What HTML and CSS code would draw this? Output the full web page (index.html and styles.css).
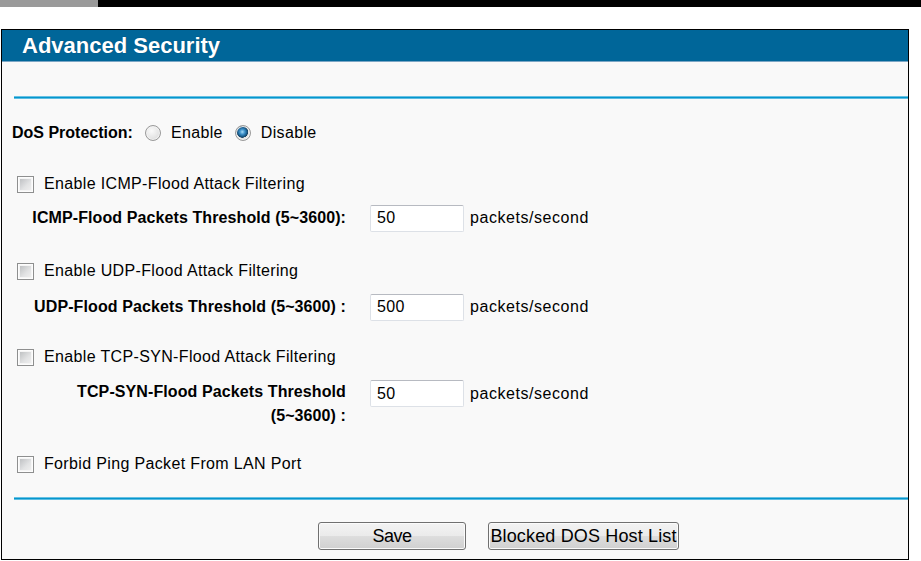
FILE: index.html
```html
<!DOCTYPE html>
<html>
<head>
<meta charset="utf-8">
<title>Advanced Security</title>
<link rel="stylesheet" href="styles.css">
</head>
<body>
<div class="topbar"><div class="topbar-gray"></div></div>
<div class="frame">
  <div class="header">Advanced Security</div>
  <div class="rule rule-top"></div>

  <div class="row row-dos">
    <span class="bold">DoS Protection:</span>
    <input type="radio" name="dos" class="radio radio-first">
    <span class="txt">Enable</span>
    <input type="radio" name="dos" class="radio" checked>
    <span class="txt">Disable</span>
  </div>

  <div class="row row-cb row-gap17">
    <input type="checkbox" class="cb">
    <span class="txt">Enable ICMP-Flood Attack Filtering</span>
  </div>
  <div class="row row-th">
    <span class="label bold">ICMP-Flood Packets Threshold (5~3600):</span>
    <input type="text" class="field" value="50">
    <span class="txt unit">packets/second</span>
  </div>

  <div class="row row-cb row-gap19">
    <input type="checkbox" class="cb">
    <span class="txt">Enable UDP-Flood Attack Filtering</span>
  </div>
  <div class="row row-th row-gap2">
    <span class="label bold">UDP-Flood Packets Threshold (5~3600) :</span>
    <input type="text" class="field" value="500">
    <span class="txt unit">packets/second</span>
  </div>

  <div class="row row-cb row-gap16">
    <input type="checkbox" class="cb">
    <span class="txt">Enable TCP-SYN-Flood Attack Filtering</span>
  </div>
  <div class="row row-th row-wrap">
    <span class="label bold">TCP-SYN-Flood Packets Threshold (5~3600) :</span>
    <input type="text" class="field" value="50">
    <span class="txt unit">packets/second</span>
  </div>

  <div class="row row-cb row-gap19">
    <input type="checkbox" class="cb">
    <span class="txt">Forbid Ping Packet From LAN Port</span>
  </div>

  <div class="rule rule-bottom"></div>

  <div class="buttons">
    <button class="btn btn-save">Save</button>
    <button class="btn btn-list">Blocked DOS Host List</button>
  </div>
</div>
</body>
</html>
```

FILE: styles.css
```css
html, body {
  margin: 0;
  padding: 0;
  background: #ffffff;
}

body {
  font-family: "Liberation Sans", Arial, sans-serif;
  font-size: 16px;
  color: #000;
  width: 921px;
  height: 561px;
  overflow: hidden;
}

.topbar {
  height: 7px;
  background: #000;
  display: flex;
}

.topbar-gray {
  width: 98px;
  background: #9a9a9a;
}

.frame {
  box-sizing: border-box;
  margin-top: 22px;
  margin-left: 1px;
  width: 908px;
  height: 531px;
  border: 1px solid #000;
  background: #f9f9f9;
  display: flex;
  flex-direction: column;
}

.header {
  height: 31px;
  line-height: 31px;
  background: #006699;
  border-bottom: 1px solid #7ba6c5;
  color: #fff;
  font-weight: bold;
  font-size: 22px;
  padding-left: 20px;
  text-shadow: 0 0 1px rgba(0, 40, 70, 0.6);
}

.rule {
  height: 3px;
  margin-left: 12px;
  background: linear-gradient(#68c1e3 0%, #68c1e3 33%, #0596cd 33%, #0596cd 67%, #5dbde2 67%);
}

.rule-top {
  margin-top: 34px;
}

.rule-bottom {
  margin-top: 16px;
}

.row {
  display: flex;
  align-items: center;
  height: 34px;
  flex-shrink: 0;
}

.row-dos {
  margin-top: 17px;
  padding-left: 10px;
}

.row-gap17 { margin-top: 17px; }
.row-gap19 { margin-top: 19px; }
.row-gap16 { margin-top: 16px; }
.row-gap2 { margin-top: 2px; }

.bold {
  font-weight: bold;
}

.txt {
  letter-spacing: 0.35px;
}

.radio {
  appearance: none;
  -webkit-appearance: none;
  box-sizing: border-box;
  width: 16px;
  height: 16px;
  margin: 0 10px 0 12px;
  border-radius: 50%;
  border: 1px solid #9a9a9a;
  background: radial-gradient(circle at 40% 35%, #fafafa 0%, #e6e6e6 55%, #cfcfcf 100%);
  box-shadow: inset 0 0 0 1px #f2f2f2;
}

.radio:checked {
  background:
    radial-gradient(circle at 45% 42%, #a8dcf6 0%, #3f92cb 22%, #1b5f8f 40%, #173f5e 50%, rgba(0,0,0,0) 54%),
    radial-gradient(circle at 40% 35%, #fafafa 0%, #e6e6e6 55%, #cfcfcf 100%);
}

.radio-first {
  margin-left: 12px;
}

.row-cb {
  padding-left: 15px;
}

.cb {
  appearance: none;
  -webkit-appearance: none;
  box-sizing: border-box;
  width: 17px;
  height: 17px;
  margin: 1px 10px 0 0;
  padding: 2px;
  border: 1px solid #8e8f8f;
  background: linear-gradient(135deg, #bfc1c3 0%, #e2e3e4 60%, #eeeeee 100%) content-box, #f5f5f5;
  box-shadow: inset 0 0 0 1px #fdfdfd;
}

.row-th {
  padding-left: 23px;
}

.label {
  width: 321px;
  flex-shrink: 0;
  text-align: right;
  letter-spacing: 0.1px;
}

.field {
  box-sizing: border-box;
  width: 94px;
  height: 27px;
  margin: 0 0 0 24px;
  padding: 0 0 0 6px;
  border: 1px solid #dde1e7;
  border-top-color: #b7bac1;
  border-radius: 2px;
  background: #fff;
  font-family: "Liberation Sans", Arial, sans-serif;
  font-size: 16px;
  letter-spacing: 0.3px;
  color: #000;
}

.unit {
  margin-left: 6px;
  letter-spacing: 0.55px;
}

.row-wrap {
  height: auto;
  margin-top: 6px;
  align-items: flex-start;
}

.row-wrap .label {
  line-height: 24px;
}

.row-wrap .unit {
  line-height: 27px;
}

.buttons {
  display: flex;
  margin-top: 22px;
  padding-left: 316px;
  gap: 22px;
}

.btn {
  box-sizing: border-box;
  height: 28px;
  padding: 0;
  border: 1px solid #707070;
  border-radius: 3px;
  background: linear-gradient(#f3f3f3 0%, #ebebeb 48%, #dddddd 52%, #d0d0d0 100%);
  box-shadow: inset 0 0 0 1px #fbfbfb;
  font-family: "Liberation Sans", Arial, sans-serif;
  font-size: 18px;
  color: #000;
}

.btn-save {
  width: 148px;
  letter-spacing: -0.5px;
}

.btn-list {
  width: 191px;
  letter-spacing: 0.15px;
}
```
